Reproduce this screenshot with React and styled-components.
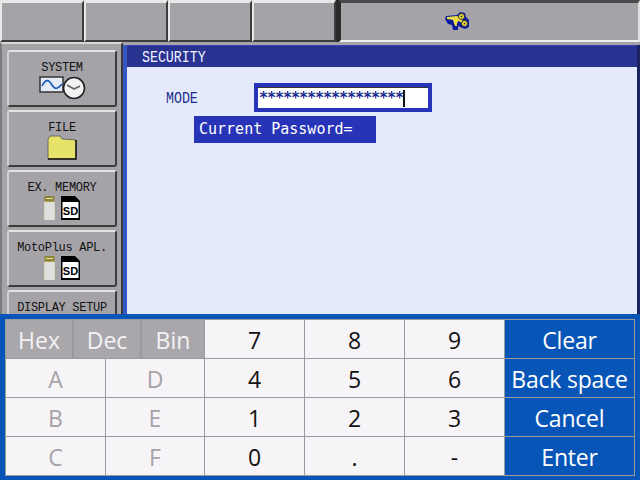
import React from 'react';
import styled, { createGlobalStyle } from 'styled-components';

const Global = createGlobalStyle`
  html, body { margin: 0; padding: 0; background: #a5a3a8; }
`;

const Screen = styled.div`
  width: 640px;
  height: 480px;
  display: flex;
  flex-direction: column;
  overflow: hidden;
`;

const TopBar = styled.div`
  height: 42px;
  flex: none;
  display: flex;
  background: #2a2a2a;
  box-sizing: border-box;
`;

const TopButton = styled.div`
  width: ${(p) => (p.$wide ? '301px' : '84px')};
  margin-left: ${(p) => (p.$wide ? '3px' : '0')};
  padding-left: ${(p) => (p.$wide ? '104px' : '0')};
  box-sizing: border-box;
  background: #a5a3a8;
  border-style: solid;
  border-width: 3px 2px 2px 2px;
  border-color: ${(p) =>
    p.$wide ? '#4a4a4a #e0e0e0 #f0f0f0 #2a2a2a' : '#e8e8e8 #3c3c3c #3c3c3c #e8e8e8'};
  display: flex;
  align-items: center;
`;

const Middle = styled.div`
  height: 272px;
  flex: none;
  display: flex;
  overflow: hidden;
`;

const Side = styled.div`
  width: 123px;
  flex: none;
  box-sizing: border-box;
  padding: 6px 0 0 5px;
  display: flex;
  flex-direction: column;
  gap: 3px;
  background: #a5a3a8;
  border-top: 2px solid #d8d8d8;
  border-left: 2px solid #7c7c80;
  border-right: 2px solid #3a3a3e;
`;

const MenuButton = styled.div`
  width: 110px;
  height: 57px;
  flex: none;
  box-sizing: border-box;
  background: #a5a3a8;
  border: 2px solid;
  border-color: #e4e4e4 #3c3c3c #3c3c3c #d0d0d0;
  border-radius: 3px;
  padding-top: 10px;
  display: flex;
  flex-direction: column;
  align-items: center;
`;

const MenuLabel = styled.div`
  height: 12px;
  font: 12px/13px "Liberation Mono", monospace;
  color: #111;
  letter-spacing: -0.3px;
  white-space: nowrap;
`;

const IconRow = styled.div`
  display: flex;
  align-items: center;
  gap: 6px;
  height: 27px;
`;

const Panel = styled.div`
  flex: 1;
  background: #e4eafc;
  border-left: 4px solid #3558c4;
  border-right: 3px solid #1c2460;
  margin-top: 3px;
`;

const TitleBar = styled.div`
  height: 22px;
  background: #283291;
  padding: 2px 0 0 15px;
  border-top: 1px solid #3a46b0;
  box-sizing: border-box;
`;

const NarrowText = styled.span`
  display: inline-block;
  font: 17px/20px "Liberation Mono", monospace;
  color: ${(p) => p.$color};
  transform: scaleX(0.78);
  transform-origin: left center;
  white-space: nowrap;
`;

const FormRow = styled.div`
  display: flex;
  align-items: center;
  margin-top: 16px;
  padding-left: 39px;
`;

const ModeLabel = styled.div`
  width: 88px;
  height: 20px;
  padding-top: 2px;
`;

const PasswordBox = styled.div`
  width: 178px;
  height: 29px;
  box-sizing: border-box;
  background: #2834b8;
  padding: 4px;
`;

const PasswordInner = styled.div`
  height: 21px;
  box-sizing: border-box;
  background: #fff;
  border-top: 1px solid #333;
  color: #1c2a8a;
  font: bold 15px/20px "DejaVu Sans Mono", monospace;
  letter-spacing: -1.03px;
  padding-left: 1px;
  display: flex;
  align-items: center;
  overflow: hidden;
`;

const Caret = styled.span`
  display: block;
  width: 2px;
  height: 17px;
  background: #111;
`;

const Prompt = styled.div`
  margin: 4px 0 0 67px;
  width: 182px;
  height: 27px;
  box-sizing: border-box;
  padding-left: 5px;
  background: #2834b8;
  color: #fff;
  font: 15px/27px "DejaVu Sans Mono", monospace;
  overflow: hidden;
`;

const KeypadFrame = styled.div`
  flex: 1;
  box-sizing: border-box;
  background: #0855b8;
  padding: 5px 5px 4px;
`;

const Keypad = styled.div`
  display: grid;
  height: 157px;
  grid-template-columns: 199px 100px 100px 100px 130px;
  grid-template-rows: repeat(4, 1fr);
  border-top: 1px solid #9a9a9e;
  border-left: 1px solid #9a9a9e;
  box-sizing: border-box;
`;

const Key = styled.div`
  box-sizing: border-box;
  display: flex;
  align-items: center;
  justify-content: center;
  padding-top: 2px;
  border-right: 1px solid #9a9a9e;
  border-bottom: 1px solid #9a9a9e;
  font: 23px/1 "Open Sans", sans-serif;
  letter-spacing: ${(p) => (p.$action ? '-0.2px' : '0')};
  background: ${(p) => (p.$action ? '#0855b8' : '#f7f4f7')};
  color: ${(p) => (p.$action ? '#fff' : p.$muted ? '#a5a3a8' : '#111')};
  white-space: nowrap;
`;

const RadixTabs = styled.div`
  display: grid;
  grid-template-columns: 68px 68px 62px;
  border-right: 1px solid #9a9a9e;
  border-bottom: 1px solid #9a9a9e;
  box-sizing: border-box;
`;

const RadixTab = styled.div`
  display: flex;
  align-items: center;
  justify-content: center;
  padding-top: 2px;
  background: #a9a7ab;
  color: #f4f2f4;
  font: 23px/1 "Open Sans", sans-serif;
  border-right: ${(p) => (p.$last ? 'none' : '2px solid #9a9a9e')};
`;

const HexPair = styled.div`
  display: grid;
  grid-template-columns: 100px 99px;
`;

const WaveClock = () => (
  <svg width="47" height="25" viewBox="0 0 47 25">
    <rect x="1" y="2" width="23" height="15" fill="#e4ecf8" stroke="#333" strokeWidth="1.5" />
    <path d="M3 11 C7 3 10 5 13 10 S19 14 23 9" fill="none" stroke="#1a58b8" strokeWidth="1.6" />
    <circle cx="35" cy="13" r="10.5" fill="#f2f2f2" stroke="#222" strokeWidth="1.6" />
    <path d="M28 10 L35 14 L41 11" fill="none" stroke="#666" strokeWidth="1.8" />
  </svg>
);

const Folder = () => (
  <svg width="30" height="25" viewBox="0 0 30 25">
    <path d="M1 4 L3 1 L13 1 L15 4 L29 5 L29 24 L1 24 Z" fill="#e6e26a" stroke="#555" strokeWidth="0.8" />
    <path d="M29 5 L29 24 L1 24" fill="none" stroke="#111" strokeWidth="1.5" />
  </svg>
);

const UsbStick = () => (
  <svg width="11" height="24" viewBox="0 0 11 24">
    <rect x="0.5" y="0" width="10" height="6" fill="#8c8436" />
    <rect x="2" y="2" width="7" height="1" fill="#e8e0a0" />
    <rect x="0.5" y="6" width="10" height="18" fill="#dfdfe0" stroke="#e6e4b0" strokeWidth="0.6" />
  </svg>
);

const SdCard = () => (
  <svg width="19" height="24" viewBox="0 0 19 24">
    <path d="M0 0 L14 0 L19 5 L19 24 L0 24 Z" fill="#000" />
    <rect x="1.5" y="6" width="16" height="16" fill="#fff" />
    <text x="9.5" y="18.5" fontFamily="Liberation Sans, sans-serif" fontWeight="bold" fontSize="11" textAnchor="middle" fill="#000">SD</text>
  </svg>
);

const Keys = () => (
  <svg width="24" height="19" viewBox="0 0 24 19">
    <path d="M0 7 L1 4 L12 3 L15 0 L20 1 L21 5 L24 8 L24 15 L20 17 L15 15 L13 14 L13 18 L8 18 L7 13 L3 12 Z" fill="#0c1a9c" />
    <path d="M2 5 L12 4 L18 9 L18 11 L13 9 L12 12 L9 12 L9 8 L2 7 Z" fill="#eede40" />
    <path d="M8 8 L10 14 L12 14 L11 8 Z" fill="#eede40" />
    <circle cx="16.5" cy="4.5" r="3" fill="#eede40" stroke="#222" strokeWidth="0.8" />
    <circle cx="19.5" cy="11.5" r="3" fill="#eede40" stroke="#222" strokeWidth="0.8" />
    <circle cx="16.5" cy="4.5" r="0.9" fill="#333" />
    <circle cx="19.5" cy="11.5" r="0.9" fill="#333" />
  </svg>
);

const Storage = () => (
  <IconRow>
    <UsbStick />
    <SdCard />
  </IconRow>
);

const menu = [
  { label: 'SYSTEM', icon: <WaveClock /> },
  { label: 'FILE', icon: <Folder /> },
  { label: 'EX. MEMORY', icon: <Storage /> },
  { label: 'MotoPlus APL.', icon: <Storage /> },
  { label: 'DISPLAY SETUP' },
];

const keyRows = [
  ['7', '8', '9', 'Clear'],
  ['4', '5', '6', 'Back space'],
  ['1', '2', '3', 'Cancel'],
  ['0', '.', '-', 'Enter'],
];

const hexRows = [null, ['A', 'D'], ['B', 'E'], ['C', 'F']];

export default function App() {
  return (
    <Screen>
      <Global />
      <TopBar>
        <TopButton />
        <TopButton />
        <TopButton />
        <TopButton />
        <TopButton $wide>
          <Keys />
        </TopButton>
      </TopBar>
      <Middle>
        <Side>
          {menu.map((m) => (
            <MenuButton key={m.label}>
              <MenuLabel>{m.label}</MenuLabel>
              {m.icon && <IconRow>{m.icon}</IconRow>}
            </MenuButton>
          ))}
        </Side>
        <Panel>
          <TitleBar>
            <NarrowText $color="#f2f2ff">SECURITY</NarrowText>
          </TitleBar>
          <FormRow>
            <ModeLabel>
              <NarrowText $color="#1c2a8a">MODE</NarrowText>
            </ModeLabel>
            <PasswordBox>
              <PasswordInner>
                ******************
                <Caret />
              </PasswordInner>
            </PasswordBox>
          </FormRow>
          <Prompt>Current Password=</Prompt>
        </Panel>
      </Middle>
      <KeypadFrame>
        <Keypad>
          {keyRows.map((row, i) => (
            <React.Fragment key={row[3]}>
              {hexRows[i] ? (
                <HexPair>
                  <Key $muted>{hexRows[i][0]}</Key>
                  <Key $muted>{hexRows[i][1]}</Key>
                </HexPair>
              ) : (
                <RadixTabs>
                  <RadixTab>Hex</RadixTab>
                  <RadixTab>Dec</RadixTab>
                  <RadixTab $last>Bin</RadixTab>
                </RadixTabs>
              )}
              <Key>{row[0]}</Key>
              <Key>{row[1]}</Key>
              <Key>{row[2]}</Key>
              <Key $action>{row[3]}</Key>
            </React.Fragment>
          ))}
        </Keypad>
      </KeypadFrame>
    </Screen>
  );
}
